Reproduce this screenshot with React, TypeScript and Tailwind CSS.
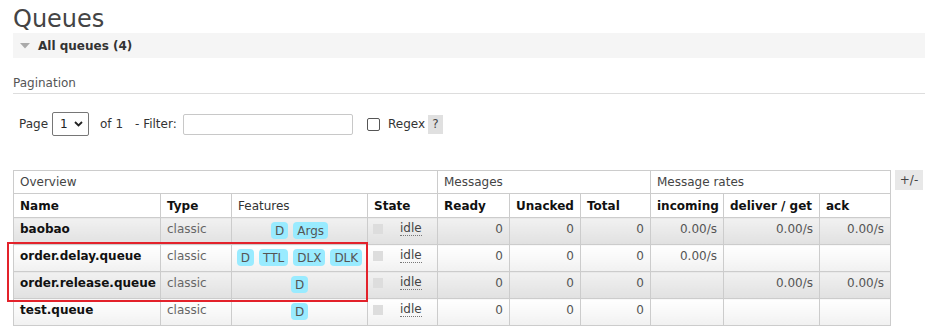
import React from "react";

type Row = {
  name: string;
  features: string[];
  incoming: string;
  deliver: string;
  ack: string;
  alt: 1 | 2;
};

const rows: Row[] = [
  { name: "baobao", features: ["D", "Args"], incoming: "0.00/s", deliver: "0.00/s", ack: "0.00/s", alt: 1 },
  { name: "order.delay.queue", features: ["D", "TTL", "DLX", "DLK"], incoming: "0.00/s", deliver: "", ack: "", alt: 2 },
  { name: "order.release.queue", features: ["D"], incoming: "", deliver: "0.00/s", ack: "0.00/s", alt: 1 },
  { name: "test.queue", features: ["D"], incoming: "", deliver: "", ack: "", alt: 2 },
];

const alt1 = "bg-linear-to-b from-[#f1f1f1] to-[#e1e1e1]";
const alt2 = "bg-linear-to-b from-[#ffffff] to-[#f1f1f1]";
const cell = "border border-[#cccccc] align-top px-[6px] pt-[4px] pb-0 leading-[14px]";
const head = "border border-[#cccccc] align-middle px-[6px] py-0 leading-[14px] text-left";

export default function App() {
  return (
    <div className="relative w-[925px] h-[334px] overflow-hidden bg-white pl-[13px] font-['DejaVu_Sans',Verdana,sans-serif] text-[12px] text-[#444444]">
      <h1 className="mt-[6px] text-[24px] leading-[27px] font-normal text-[#444444]">Queues</h1>
      <div className="flex h-[25px] items-center bg-[#f5f5f5]">
        <svg className="ml-[7px]" width="10" height="6" viewBox="0 0 10 6">
          <polygon points="0,0 10,0 5,5.5" fill="#aaaaaa" />
        </svg>
        <span className="ml-[8px] font-bold text-[#333333]">All queues (4)</span>
      </div>
      <div className="mt-[18px] border-b border-[#dddddd] pb-[3px] leading-[14px] text-[#555555]">Pagination</div>
      <div className="mt-[18px] flex h-[24px] items-center pl-[6px] text-[#333333]">
        <span className="w-[33px]">Page</span>
        <div className="relative h-[24px] w-[37px]">
          <select className="h-[24px] w-[37px] appearance-none rounded-[2px] border border-[#767676] bg-white pl-[7px] text-[12px] text-[#222222]">
            <option>1</option>
          </select>
          <svg className="pointer-events-none absolute left-[22px] top-[9px]" width="9" height="6" viewBox="0 0 9 6">
            <polyline points="1,1 4.5,4.5 8,1" fill="none" stroke="#222222" strokeWidth="1.8" />
          </svg>
        </div>
        <span className="ml-[11px] w-[35px]">of 1</span>
        <span className="w-[48px]">- Filter:</span>
        <input className="h-[21px] w-[170px] rounded-[2px] border border-[#c8c8c8] bg-white" type="text" />
        <input className="ml-[14px] h-[13px] w-[13px] appearance-none rounded-[2px] border border-[#555555] bg-white" type="checkbox" />
        <span className="ml-[8px] w-[40px]">Regex</span>
        <span className="flex h-[19px] w-[15px] items-center justify-center bg-[#e0e0e0] text-[#444444]">?</span>
      </div>
      <div className="mt-[34px] flex items-start">
        <table className="w-[878px] table-fixed border-collapse text-[12px]">
          <colgroup>
            <col className="w-[147px]" />
            <col className="w-[71px]" />
            <col className="w-[136px]" />
            <col className="w-[70px]" />
            <col className="w-[72px]" />
            <col className="w-[71px]" />
            <col className="w-[70px]" />
            <col className="w-[73px]" />
            <col className="w-[96px]" />
            <col className="w-[71px]" />
          </colgroup>
          <thead>
            <tr className="h-[23px] bg-white">
              <th colSpan={4} className={`${head} font-normal text-[#444444]`}>Overview</th>
              <th colSpan={3} className={`${head} font-normal text-[#444444]`}>Messages</th>
              <th colSpan={3} className={`${head} font-normal text-[#444444]`}>Message rates</th>
            </tr>
            <tr className="h-[24px] bg-white text-[#111111]">
              <th className={`${head} font-bold`}>Name</th>
              <th className={`${head} font-bold`}>Type</th>
              <th className={`${head} font-normal text-[#333333]`}>Features</th>
              <th className={`${head} font-bold`}>State</th>
              <th className={`${head} font-bold`}>Ready</th>
              <th className={`${head} font-bold`}>Unacked</th>
              <th className={`${head} font-bold`}>Total</th>
              <th className={`${head} font-bold`}>incoming</th>
              <th className={`${head} font-bold whitespace-nowrap`}>deliver / get</th>
              <th className={`${head} font-bold`}>ack</th>
            </tr>
          </thead>
          <tbody>
            {rows.map((r) => {
              const bg = r.alt === 1 ? alt1 : alt2;
              return (
                <tr key={r.name} className="h-[27px]">
                  <td className={`${cell} ${bg} whitespace-nowrap font-bold text-[#111111]`}>{r.name}</td>
                  <td className={`${cell} ${bg} text-[#666666]`}>classic</td>
                  <td className={`${cell} ${bg}`}>
                    <div className="flex justify-center gap-[5px]">
                      {r.features.map((f) => (
                        <span key={f} className="flex h-[17px] items-center rounded-[4px] bg-[#99ebff] px-[4px] text-[#555555]">
                          {f}
                        </span>
                      ))}
                    </div>
                  </td>
                  <td className={`${cell} ${bg} pl-[5px]`}>
                    <div className="flex items-start">
                      <span className="mt-[2px] h-[10px] w-[10px] bg-[#dddddd]" />
                      <span className="ml-[17px] border-b border-dotted border-[#777777] leading-[13px] text-[#444444]">idle</span>
                    </div>
                  </td>
                  <td className={`${cell} ${bg} text-right text-[#555555]`}>0</td>
                  <td className={`${cell} ${bg} text-right text-[#555555]`}>0</td>
                  <td className={`${cell} ${bg} text-right text-[#555555]`}>0</td>
                  <td className={`${cell} ${bg} text-right text-[#555555]`}>{r.incoming}</td>
                  <td className={`${cell} ${bg} text-right text-[#555555]`}>{r.deliver}</td>
                  <td className={`${cell} ${bg} text-right text-[#555555]`}>{r.ack}</td>
                </tr>
              );
            })}
          </tbody>
        </table>
        <div className="ml-[4px] flex h-[20px] w-[28px] items-center justify-center bg-[#e8e8e8] text-[#444444]">+/-</div>
      </div>
      <div className="absolute left-[7px] top-[242px] h-[60px] w-[361px] border-2 border-[#e3222b]" />
    </div>
  );
}
